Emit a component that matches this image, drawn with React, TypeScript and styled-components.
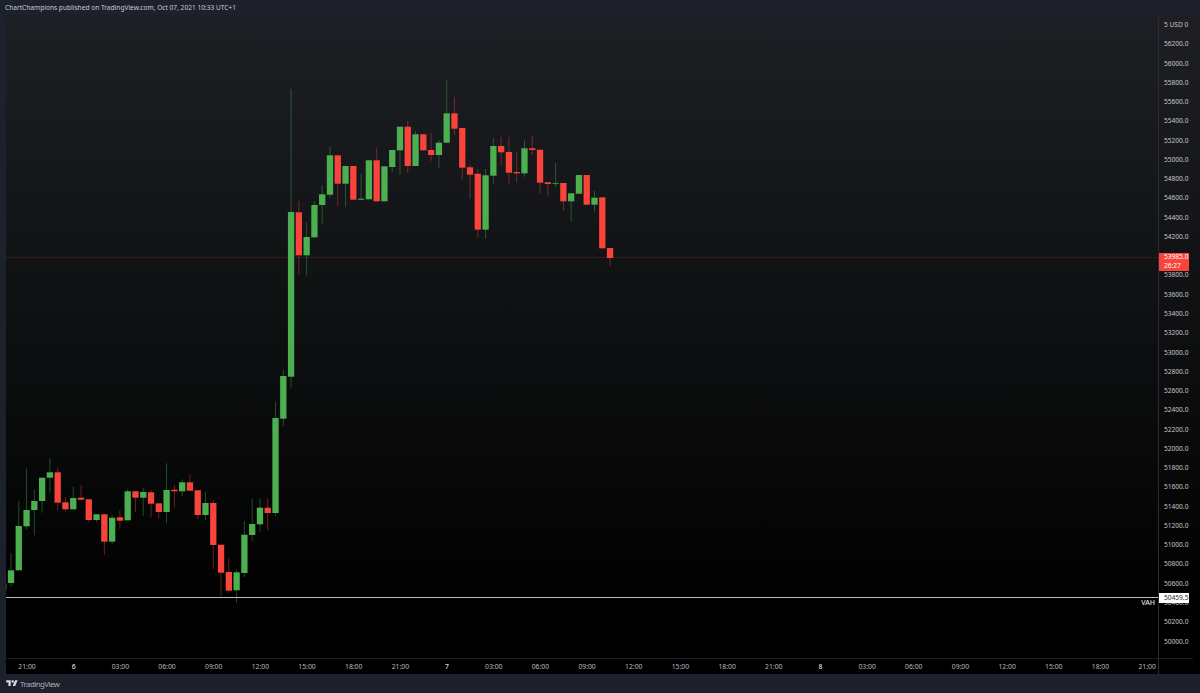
import styled, { createGlobalStyle } from 'styled-components';

type Candle = [bodyTop: number, bodyBottom: number, wickTop: number, wickBottom: number, side: 'g' | 'r'];

// Candle geometry is kept in screenshot pixels, the svg viewBox uses the same coordinates.
const CANDLES: Candle[] = [
  [582, 589, 582, 589, 'g'],
  [569.3, 582, 552.3, 586, 'g'],
  [525, 569.3, 500, 569.3, 'g'],
  [509, 525.3, 467.7, 528.3, 'g'],
  [500, 509, 488.3, 534.3, 'g'],
  [476.7, 500, 476.7, 511.7, 'g'],
  [471.3, 476.7, 457.3, 491.7, 'g'],
  [471.3, 501.7, 466.7, 509.3, 'r'],
  [501.3, 508.3, 496, 510.7, 'r'],
  [497, 508.3, 486, 508.3, 'g'],
  [496.7, 498.7, 484, 498.7, 'r'],
  [498.3, 519, 498.3, 521, 'r'],
  [513.3, 519, 513.3, 521, 'g'],
  [513.3, 540.7, 513.3, 554, 'r'],
  [516.7, 540.7, 514, 543.3, 'g'],
  [516.3, 519.7, 509.3, 528, 'r'],
  [490.3, 519.3, 488.3, 519.3, 'g'],
  [490.3, 496.7, 490.3, 511, 'r'],
  [491, 496.7, 486.7, 514.7, 'g'],
  [491.3, 502.7, 489, 516, 'r'],
  [502.3, 511, 502.3, 517.7, 'r'],
  [489, 511, 462.3, 522.3, 'g'],
  [488.7, 490.3, 484, 506.7, 'r'],
  [481.3, 490.3, 478.3, 495.3, 'g'],
  [481.3, 489.7, 473.3, 489.7, 'r'],
  [489.3, 514, 489.3, 518, 'r'],
  [502, 514, 491, 519.3, 'g'],
  [502, 544, 499.3, 568, 'r'],
  [543.7, 571.7, 543.7, 595.3, 'r'],
  [571, 589.7, 557.3, 592, 'r'],
  [571.3, 589.3, 568.3, 602, 'g'],
  [533.7, 572, 520, 576, 'g'],
  [523, 534, 497.7, 540, 'g'],
  [506.7, 523.3, 497.3, 530.7, 'g'],
  [506.7, 512, 497.3, 529.3, 'r'],
  [417, 512, 400.7, 515, 'g'],
  [375, 417.7, 368.7, 425, 'g'],
  [211, 375.7, 88, 386.7, 'g'],
  [211.3, 254.3, 200, 274, 'r'],
  [236, 254.3, 221.7, 274.3, 'g'],
  [204, 236.3, 200, 236.3, 'g'],
  [193.3, 204, 184, 223.3, 'g'],
  [154.3, 193.7, 145.7, 196.7, 'g'],
  [154.3, 182.7, 154.3, 205, 'r'],
  [165, 182.7, 165, 205.7, 'g'],
  [165, 198.7, 165, 198.7, 'r'],
  [197.7, 198.7, 172.7, 198.7, 'g'],
  [159.3, 198.3, 159.3, 198.3, 'g'],
  [159.3, 200.3, 146.7, 200.3, 'r'],
  [165.3, 200.3, 165.3, 200.3, 'g'],
  [149, 166, 149, 171, 'g'],
  [125.7, 149.3, 125.7, 174, 'g'],
  [125.7, 165, 120, 171.7, 'r'],
  [133.3, 165, 130, 165, 'g'],
  [133.3, 149.3, 133.3, 149.3, 'r'],
  [149, 154, 131.7, 160, 'r'],
  [141.7, 154, 139.3, 167.3, 'g'],
  [112.3, 141.7, 79, 141.7, 'g'],
  [112.3, 127.7, 96, 134, 'r'],
  [127, 166.7, 127, 178.3, 'r'],
  [166.3, 173.7, 163.3, 197.7, 'r'],
  [172.7, 228.7, 168.3, 236.7, 'r'],
  [174.3, 228.7, 168, 237.7, 'g'],
  [145, 174.7, 137.3, 182.7, 'g'],
  [145, 151.3, 136, 164.3, 'r'],
  [151, 171.7, 136, 182.7, 'r'],
  [171, 172.3, 151.3, 181.7, 'r'],
  [147.3, 172.3, 139.3, 175.7, 'g'],
  [147.3, 149, 134.7, 154, 'r'],
  [148.7, 181.7, 148.7, 192.7, 'r'],
  [181.3, 183, 181.3, 195.7, 'r'],
  [182, 182.7, 161.7, 186, 'g'],
  [182, 200.3, 182, 210, 'r'],
  [192.3, 200.3, 192.3, 220.7, 'g'],
  [174, 192.7, 174, 192.7, 'g'],
  [174, 203.7, 174, 203.7, 'r'],
  [196.7, 203.7, 190, 210.7, 'g'],
  [196.3, 247.3, 196.3, 247.3, 'r'],
  [247, 257, 247, 265, 'r'],
];

const CANDLE_STEP = 7.78;
const CANDLE_ORIGIN = 3.22;
const BODY_WIDTH = 6.3;

const PRICES = Array.from({ length: 32 }, (_, i) => (56200 - i * 200).toFixed(1));
// This row sits fully behind the last price tag, so it keeps its slot but shows no text.
const COVERED_PRICE = '54000.0';

const TIMES = [
  '21:00', '6', '03:00', '06:00', '09:00', '12:00', '15:00', '18:00', '21:00',
  '7', '03:00', '06:00', '09:00', '12:00', '15:00', '18:00', '21:00',
  '8', '03:00', '06:00', '09:00', '12:00', '15:00', '18:00', '21:00',
];

function CandleChart() {
  return (
    <ChartSvg viewBox="6 14 1152 643" preserveAspectRatio="none">
      <line x1="6" x2="1158" y1="256.5" y2="256.5" stroke="#f44336" strokeOpacity="0.38" strokeWidth="1" strokeDasharray="1 1.5" />
      {CANDLES.map(([bodyTop, bodyBottom, wickTop, wickBottom, side], i) => {
        const x = CANDLE_ORIGIN + i * CANDLE_STEP;
        const color = side === 'g' ? '#4caf50' : '#f8443a';
        return (
          <g key={i}>
            <line x1={x} x2={x} y1={wickTop} y2={wickBottom} stroke={color} strokeOpacity="0.42" strokeWidth="1" />
            <rect x={x - BODY_WIDTH / 2} y={bodyTop} width={BODY_WIDTH} height={bodyBottom - bodyTop} fill={color} />
          </g>
        );
      })}
      <line x1="6" x2="1158" y1="596.5" y2="596.5" stroke="#bcbcbc" strokeWidth="1" />
    </ChartSvg>
  );
}

function TradingViewMark() {
  return (
    <LogoSvg viewBox="0 0 36 28" aria-hidden="true">
      <path d="M14 22H7V11H0V4h14v18zM28 22h-8l7.5-18h8L28 22z" />
      <circle cx="20" cy="8" r="4" />
    </LogoSvg>
  );
}

export default function App() {
  return (
    <>
      <GlobalStyle />
      <Page>
        <Header>ChartChampions published on TradingView.com, Oct 07, 2021 10:33 UTC+1</Header>
        <Panel>
          <ChartPane>
            <CandleChart />
            <LevelLabel>VAH</LevelLabel>
          </ChartPane>
          <PriceAxis>
            <PriceRow>5 USD 0</PriceRow>
            {PRICES.map((price) => (
              <PriceRow key={price}>{price === COVERED_PRICE ? null : price}</PriceRow>
            ))}
            <LastPriceTag>
              <span>53985.0</span>
              <span>26:27</span>
            </LastPriceTag>
            <LevelTag>50459.5</LevelTag>
          </PriceAxis>
          <TimeAxis>
            <TimeTrack>
              {TIMES.map((time, i) => (
                <TimeCell key={i} $major={time.length === 1}>
                  {time}
                </TimeCell>
              ))}
            </TimeTrack>
          </TimeAxis>
          <AxisCorner />
        </Panel>
        <Footer>
          <TradingViewMark />
          <Brand>TradingView</Brand>
        </Footer>
      </Page>
    </>
  );
}

const GlobalStyle = createGlobalStyle`
  html,
  body {
    margin: 0;
    padding: 0;
    background: #1d212c;
  }
`;

const Page = styled.div`
  display: flex;
  flex-direction: column;
  width: 1200px;
  height: 693px;
  overflow: hidden;
  background: #1d212c;
  font-family: 'Noto Sans', 'Open Sans', sans-serif;
`;

const Header = styled.header`
  flex: 0 0 14px;
  padding-left: 5px;
  color: #c9cbd1;
  font-size: 6.6px;
  line-height: 15px;
  white-space: nowrap;
`;

const Panel = styled.main`
  display: grid;
  grid-template-columns: 1152px 35px;
  grid-template-rows: 643px 16px;
  margin-left: 6px;
  background: linear-gradient(180deg, #1e1f24 0%, #0d0e0f 52%, #000000 92%);
`;

const ChartPane = styled.section`
  position: relative;
  overflow: hidden;
`;

const ChartSvg = styled.svg`
  display: block;
  width: 100%;
  height: 100%;
`;

const LevelLabel = styled.span`
  position: absolute;
  right: 3px;
  top: 583px;
  color: #e4e4e4;
  font-size: 7px;
  font-weight: 500;
  line-height: 9px;
`;

const PriceAxis = styled.aside`
  position: relative;
  border-left: 1px solid #2a2c31;
  overflow: hidden;
`;

const PriceRow = styled.div`
  height: 19.27px;
  padding-left: 5px;
  color: #c4c5c9;
  font-size: 6.6px;
  line-height: 19.27px;
  white-space: nowrap;
`;

const LastPriceTag = styled.div`
  position: absolute;
  left: 0;
  top: 238px;
  display: flex;
  flex-direction: column;
  justify-content: center;
  width: 30px;
  height: 17.5px;
  padding-left: 5px;
  box-sizing: border-box;
  background: #f8443a;
  color: #ffffff;
  font-size: 6.6px;
  line-height: 8.7px;
`;

const LevelTag = styled.div`
  position: absolute;
  left: 0;
  top: 577.5px;
  width: 30px;
  height: 10px;
  padding-left: 5px;
  box-sizing: border-box;
  background: #ffffff;
  color: #2a2a2a;
  font-size: 6.6px;
  line-height: 10px;
`;

const TimeAxis = styled.div`
  border-top: 1px solid #1c1d1f;
  overflow: hidden;
`;

const TimeTrack = styled.div`
  display: flex;
  margin-left: -2.34px;
`;

const TimeCell = styled.span<{ $major: boolean }>`
  flex: 0 0 46.68px;
  color: ${(props) => (props.$major ? '#dedee0' : '#b9bbc0')};
  font-size: 6.8px;
  font-weight: ${(props) => (props.$major ? 500 : 400)};
  line-height: 15px;
  text-align: center;
`;

const AxisCorner = styled.div`
  border-top: 1px solid #1c1d1f;
  border-left: 1px solid #2a2c31;
`;

const Footer = styled.footer`
  display: flex;
  align-items: center;
  gap: 2px;
  height: 20px;
  padding-left: 6px;
`;

const LogoSvg = styled.svg`
  width: 12px;
  height: 9px;
  fill: #d7d9de;
`;

const Brand = styled.span`
  color: #a9acb5;
  font-size: 7.8px;
  letter-spacing: -0.5px;
`;
